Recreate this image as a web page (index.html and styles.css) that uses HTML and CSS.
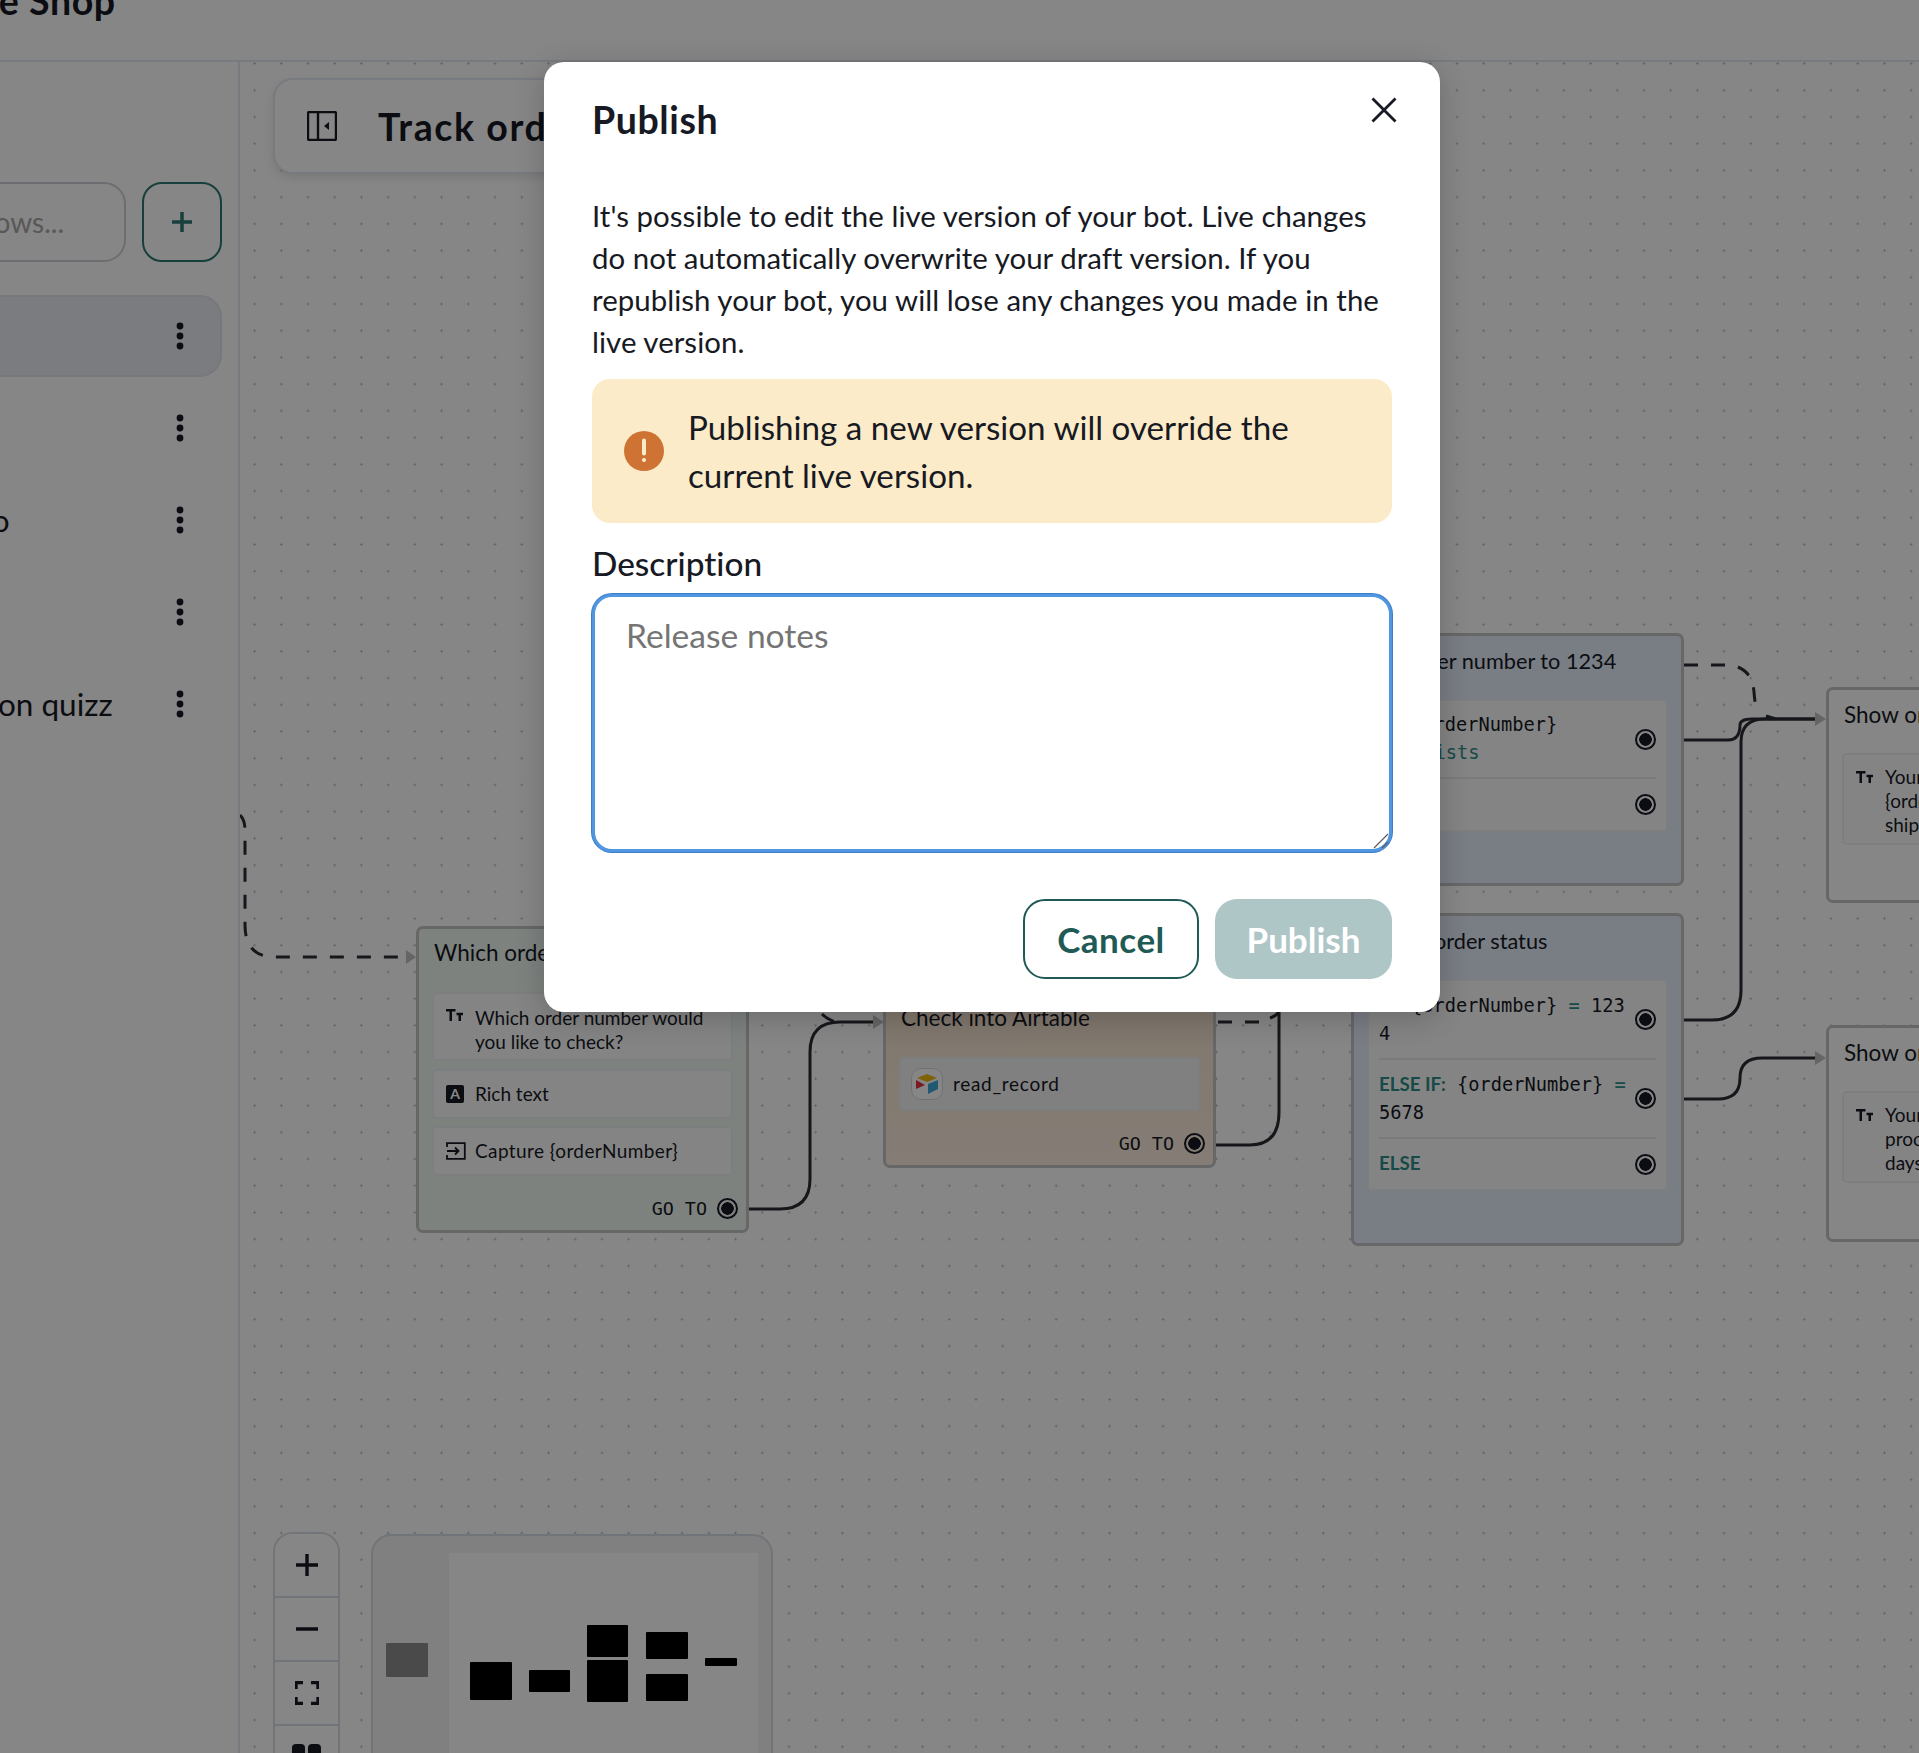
FILE: index.html
```html
<!DOCTYPE html>
<html lang="en">
<head>
<meta charset="utf-8">
<title>Publish</title>
<link rel="stylesheet" href="styles.css">
</head>
<body>
<div class="app">
  <header class="topbar"><h1 class="shop">The Shoe Shop</h1></header>
  <div class="main">
    <aside class="sidebar">
      <div class="search-row">
        <div class="search">Search flows...</div>
        <button class="add" type="button"><svg width="24" height="24" viewBox="0 0 24 24"><path d="M12 2v20M2 12h20"/></svg></button>
      </div>
      <ul class="flows">
        <li class="flow selected"><span class="flow-name">Track order</span><svg class="kebab" width="8" height="28" viewBox="0 0 8 28"><circle cx="4" cy="4" r="3.4"/><circle cx="4" cy="14" r="3.4"/><circle cx="4" cy="24" r="3.4"/></svg></li>
        <li class="flow"><span class="flow-name">Welcome</span><svg class="kebab" width="8" height="28" viewBox="0 0 8 28"><circle cx="4" cy="4" r="3.4"/><circle cx="4" cy="14" r="3.4"/><circle cx="4" cy="24" r="3.4"/></svg></li>
        <li class="flow"><span class="flow-name">Customer video</span><svg class="kebab" width="8" height="28" viewBox="0 0 8 28"><circle cx="4" cy="4" r="3.4"/><circle cx="4" cy="14" r="3.4"/><circle cx="4" cy="24" r="3.4"/></svg></li>
        <li class="flow"><span class="flow-name">FAQ</span><svg class="kebab" width="8" height="28" viewBox="0 0 8 28"><circle cx="4" cy="4" r="3.4"/><circle cx="4" cy="14" r="3.4"/><circle cx="4" cy="24" r="3.4"/></svg></li>
        <li class="flow"><span class="flow-name">Recommendation quizz</span><svg class="kebab" width="8" height="28" viewBox="0 0 8 28"><circle cx="4" cy="4" r="3.4"/><circle cx="4" cy="14" r="3.4"/><circle cx="4" cy="24" r="3.4"/></svg></li>
      </ul>
    </aside>

    <section class="canvas">
      <svg class="edges" width="1679" height="1691" viewBox="240 62 1679 1691">
        <g class="dashed">
          <path d="M240 815 Q245 820 245 830 V925 Q245 957 275 957 H406"/>
          <path d="M822 1014 Q828 1020 836 1022"/>
          <path d="M1218 1022 H1262 M1270 1018 Q1276 1016 1279 1012"/>
          <path d="M1684 665 H1730 Q1752 668 1754 692 Q1755 705 1757 710 M1766 716 L1776 719"/>
        </g>
        <g class="solid">
          <path d="M748 1209 H780 Q810 1209 810 1179 V1052 Q810 1022 840 1022 H876"/>
          <path d="M1216 1145 H1250 Q1279 1145 1279 1112 V1012"/>
          <path d="M1684 740 H1728 Q1740 740 1740 725 Q1740 719 1752 719 H1816"/>
          <path d="M1684 1020 H1712 Q1741 1020 1741 990 V742 Q1741 719 1765 719 H1816"/>
          <path d="M1684 1099 H1718 Q1740 1099 1740 1078 Q1740 1058 1762 1058 H1816"/>
        </g>
        <g class="heads">
          <path d="M406 950 L416 957 L406 964Z"/>
          <path d="M873 1015 L884 1022 L873 1029Z"/>
          <path d="M1815 712 L1826 719 L1815 726Z"/>
          <path d="M1815 1051 L1826 1058 L1815 1065Z"/>
        </g>
      </svg>

      <div class="track-panel">
        <svg class="panel-icon" width="30" height="30" viewBox="0 0 30 30"><rect x="1" y="1" width="28" height="28" rx="1.5"/><path d="M11 1v28"/><path class="fill" d="M22 11v8l-5-4z"/></svg>
        <h2 class="track-title">Track order</h2>
      </div>

      <article class="node node-ask">
        <h3 class="node-title">Which order number?</h3>
        <div class="card card-tall">
          <svg class="tt" width="17" height="12" viewBox="0 0 17 12"><path d="M0 1.2h9.5M4.75 1.2V12M10.5 5h6.5M13.75 5v7"/></svg>
          <span class="card-text">Which order number would you like to check?</span>
        </div>
        <div class="card card-row">
          <span class="rich-icon">A</span>
          <span class="card-text">Rich text</span>
        </div>
        <div class="card card-row">
          <svg class="capture" width="20" height="18" viewBox="0 0 20 18"><path d="M1 5V1.2h17.8v15.6H1V13M1 9h11M9 5.5L12.5 9 9 12.5"/></svg>
          <span class="card-text capture-text">Capture {orderNumber}</span>
        </div>
        <div class="goto"><span>GO TO</span><i class="radio"></i></div>
      </article>

      <article class="node node-air">
        <h3 class="node-title">Check into Airtable</h3>
        <div class="card card-air">
          <span class="air-icon"><svg width="22" height="20" viewBox="0 0 22 20"><path fill="#f2b90f" d="M11 0 L21 4 L11 8 L1 4Z"/><path fill="#e8303f" d="M0 6 L9 11 L0 15Z"/><path fill="#3fa9d8" d="M12 10 L22 6 V15 L12 20Z"/></svg></span>
          <span class="card-text">read_record</span>
        </div>
        <div class="goto"><span>GO TO</span><i class="radio"></i></div>
      </article>

      <article class="node node-cond node-set">
        <h3 class="node-title">Set order number to 1234</h3>
        <div class="card card-cond">
          <div class="cond cond-a">
            <div class="cond-text"><b class="kw">IF:</b> {orderNumber}<br><span class="op indent">exists</span></div>
            <i class="radio"></i>
          </div>
          <div class="cond cond-b">
            <div class="cond-text"><b class="kw">ELSE</b></div>
            <i class="radio"></i>
          </div>
        </div>
      </article>

      <article class="node node-cond node-status">
        <h3 class="node-title">Check order status</h3>
        <div class="card card-cond">
          <div class="cond cond-c">
            <div class="cond-text"><b class="kw">IF:</b> {orderNumber} <span class="op">=</span> 1234</div>
            <i class="radio"></i>
          </div>
          <div class="cond cond-c">
            <div class="cond-text"><b class="kw">ELSE IF:</b> {orderNumber} <span class="op">=</span> 5678</div>
            <i class="radio"></i>
          </div>
          <div class="cond cond-d">
            <div class="cond-text"><b class="kw">ELSE</b></div>
            <i class="radio"></i>
          </div>
        </div>
      </article>

      <article class="node node-show node-ship">
        <h3 class="node-title">Show order shipped</h3>
        <div class="card card-show">
          <svg class="tt" width="17" height="12" viewBox="0 0 17 12"><path d="M0 1.2h9.5M4.75 1.2V12M10.5 5h6.5M13.75 5v7"/></svg>
          <span class="card-text">Your order number<br>{orderNumber} is<br>shipped</span>
        </div>
      </article>

      <article class="node node-show node-proc">
        <h3 class="node-title">Show order processing</h3>
        <div class="card card-show">
          <svg class="tt" width="17" height="12" viewBox="0 0 17 12"><path d="M0 1.2h9.5M4.75 1.2V12M10.5 5h6.5M13.75 5v7"/></svg>
          <span class="card-text">Your order is still<br>processing, give it a few<br>days</span>
        </div>
      </article>

      <div class="zoom-controls">
        <button type="button"><svg width="24" height="24" viewBox="0 0 24 24"><path d="M12 1v22M1 12h22"/></svg></button>
        <button type="button"><svg width="24" height="24" viewBox="0 0 24 24"><path d="M1 12h22"/></svg></button>
        <button type="button"><svg width="24" height="24" viewBox="0 0 24 24"><path d="M1 8V1.5h7M16 1.5h7V8M23 16v6.5h-7M8 22.5H1V16"/></svg></button>
        <button type="button"><svg class="layout-icon" width="30" height="30" viewBox="0 0 30 30"><rect x="0" y="0" width="13" height="30" rx="4"/><rect x="16" y="0" width="13" height="30" rx="4"/></svg></button>
      </div>

      <div class="minimap">
        <svg width="398" height="220" viewBox="373 1536 398 220">
          <rect class="mm-view" x="449" y="1553" width="309" height="210"/>
          <rect class="mm-grey" x="386" y="1643" width="42" height="34" rx="1"/>
          <g class="mm-nodes">
            <rect x="470" y="1662" width="42" height="38" rx="1"/>
            <rect x="529" y="1670" width="41" height="22" rx="1"/>
            <rect x="587" y="1625" width="41" height="32" rx="1"/>
            <rect x="587" y="1660" width="41" height="42" rx="1"/>
            <rect x="646" y="1632" width="42" height="27" rx="1"/>
            <rect x="646" y="1674" width="42" height="27" rx="1"/>
            <rect x="705" y="1658" width="32" height="8" rx="1"/>
          </g>
        </svg>
      </div>
    </section>
  </div>
</div>

<div class="overlay">
  <div class="modal" role="dialog" aria-modal="true">
    <div class="modal-head">
      <h2 class="modal-title">Publish</h2>
      <button class="close" type="button" aria-label="Close"><svg width="26" height="26" viewBox="0 0 26 26"><path d="M1.5 1.5l23 23M24.5 1.5l-23 23"/></svg></button>
    </div>
    <p class="modal-body">It's possible to edit the live version of your bot. Live changes do not automatically overwrite your draft version. If you republish your bot, you will lose any changes you made in the live version.</p>
    <div class="alert">
      <svg class="alert-icon" width="40" height="40" viewBox="0 0 40 40"><circle cx="20" cy="20" r="20"/><path d="M20 9.5v13"/><circle class="dot" cx="20" cy="29" r="2"/></svg>
      <span class="alert-text">Publishing a new version will override the current live version.</span>
    </div>
    <label class="field-label" for="notes">Description</label>
    <div class="notes-wrap">
      <textarea class="notes" id="notes" placeholder="Release notes"></textarea>
      <svg class="grip" width="16" height="16" viewBox="0 0 16 16"><path d="M1 15L15 1M9 15l6-6"/></svg>
    </div>
    <div class="actions">
      <button class="btn btn-cancel" type="button">Cancel</button>
      <button class="btn btn-publish" type="button">Publish</button>
    </div>
  </div>
</div>
</body>
</html>
```
FILE: styles.css
```css
* { box-sizing: border-box; }
html, body { margin: 0; padding: 0; height: 1753px; overflow: hidden; background: #fff; }
body { font-family: "Lato", "Liberation Sans", sans-serif; color: #171923; position: relative; font-variant-ligatures: none; }
h1, h2, h3, p, ul { margin: 0; padding: 0; }
button { font-family: inherit; cursor: pointer; }

.app { width: 2139px; margin: -39px 0 0 -220px; }

.topbar { height: 101px; border-bottom: 2px solid #e2e8f0; padding-left: 79px; }
.shop { font-size: 37.5px; letter-spacing: .6px; line-height: 80px; font-weight: 700; }

.main { display: flex; height: 1691px; }

.sidebar { width: 460px; flex: none; border-right: 2px solid #e2e8f0; padding: 120px 16px 0 0; }
.search-row { display: flex; gap: 16px; }
.search { flex: 1; height: 80px; border: 2px solid #cbd0d6; border-radius: 22px; font-size: 28px; line-height: 76px; color: #a8a8a8; text-align: right; padding-right: 60px; }
.add { width: 80px; height: 80px; flex: none; background: #fff; border: 2px solid #2c7a72; border-radius: 20px; display: flex; align-items: center; justify-content: center; padding: 0; }
.add path { stroke: #2c7a72; stroke-width: 3.5; fill: none; }

.flows { list-style: none; margin-top: 33px; display: flex; flex-direction: column; gap: 10px; padding-left: 10px; }
.flow { height: 82px; display: flex; align-items: center; justify-content: space-between; padding-right: 36px; font-size: 31.5px; border: 2px solid transparent; border-radius: 22px; }
.flow-name { white-space: nowrap; }
.flow.selected { background: #e9ecf2; border-color: #e0e4ea; }
.kebab { fill: #171923; }

.canvas { position: relative; flex: 1; overflow: hidden; background-color: #fff;
  background-image: radial-gradient(circle, #b4b8be .9px, transparent 1.2px);
  background-size: 26.72px 26.72px; background-position: 1.24px 14.9px; }
.edges { position: absolute; left: 0; top: 0; }
.edges path { fill: none; stroke-width: 3; }
.solid path { stroke: #2a2d33; }
.dashed path { stroke: #2a2d33; stroke-dasharray: 14 13; }
.edges .heads path { fill: #c0c0c0; stroke: none; }

.track-panel { position: absolute; left: 33px; top: 16px; width: 640px; height: 96px; background: #fff; border: 2px solid #e2e8f0; border-radius: 20px; box-shadow: 0 4px 10px rgba(0,0,0,.1); display: flex; align-items: center; padding-left: 32px; gap: 41px; }
.panel-icon rect, .panel-icon path { fill: none; stroke: #171923; stroke-width: 2.4; }
.panel-icon .fill { fill: #171923; stroke: none; }
.track-title { font-size: 37.5px; letter-spacing: 1.6px; font-weight: 700; white-space: nowrap; }

.node { position: absolute; width: 333px; border: 3px solid #c4c4c4; border-radius: 7px; padding: 0 13px 10px; display: flex; flex-direction: column; gap: 7px; }
.node-title { font-size: 22.5px; font-weight: 400; line-height: 30px; padding: 9px 0 24px 2px; margin-bottom: -7px; white-space: nowrap; }
.node-ask { left: 176px; top: 864px; background: #eef7f2; }
.node-air { left: 643px; top: 929px; background: linear-gradient(#f4e2cf, #fdeedf); }
.node-set { left: 1111px; top: 571px; height: 253px; }
.node-status { left: 1111px; top: 851px; height: 333px; }
.node-ship { left: 1586px; top: 625px; height: 216px; }
.node-proc { left: 1586px; top: 963px; height: 217px; }
.node-cond { background: #e6eefc; }
.node-cond .node-title { font-size: 21.7px; padding: 10px 0 23px 2px; }
.node-show { background: #fff; }
.node-show .node-title { padding: 10px 0 23px 2px; }

.card { background: #fbfcfd; border: 2px solid #eef0f3; border-radius: 5px; font-size: 19px; line-height: 24px; display: flex; }
.card-tall { height: 69px; padding: 12px 10px 0 12px; gap: 12px; margin-bottom: 1px; }
.card-tall .tt { margin-top: 3px; flex: none; }
.card-row { height: 50px; align-items: center; padding: 0 10px 0 12px; gap: 11px; }
.card-air { height: 54px; align-items: center; padding: 0 10px; gap: 10px; background: #f3f4f6; }
.card-air .card-text { letter-spacing: .7px; }
.card-show { height: 92px; padding: 10px 0 0 12px; gap: 12px; width: 305px; }
.card-show .tt { flex: none; margin-top: 6px; }
.card-text { white-space: normal; }
.capture-text { letter-spacing: .4px; }
.tt path { fill: none; stroke: #171923; stroke-width: 2.5; }
.rich-icon { width: 18px; height: 18px; flex: none; background: #171923; color: #fff; border-radius: 2px; font-size: 14px; line-height: 18px; text-align: center; font-weight: 700; }
.capture { flex: none; margin-right: -2px; }
.capture path { fill: none; stroke: #171923; stroke-width: 1.8; }
.air-icon { width: 32px; height: 32px; flex: none; background: #fff; border: 1px solid #d6d8dc; border-radius: 10px; display: flex; align-items: center; justify-content: center; }

.goto { display: flex; justify-content: flex-end; align-items: center; gap: 10px; height: 24px; margin: 13px -5px 0 0; font-family: "DejaVu Sans Mono", monospace; font-size: 18.4px; }
.radio { display: block; width: 21px; height: 21px; border-radius: 50%; border: 2px solid #171923; background: radial-gradient(circle, #171923 0, #171923 6px, transparent 6.5px); flex: none; }

.card-cond { flex-direction: column; padding: 0 10px 0 10px; }
.cond { display: flex; justify-content: space-between; align-items: center; border-bottom: 2px solid #e6e8ec; }
.cond:last-child { border-bottom: 0; }
.cond-a { height: 78px; }
.cond-b { height: 51px; }
.cond-c { height: 79px; }
.cond-d { height: 50px; }
.cond-text { width: 250px; font-family: "DejaVu Sans Mono", monospace; font-size: 18.7px; line-height: 28px; word-break: break-all; color: #171923; margin-top: -1px; }
.kw { font-family: "Lato", sans-serif; font-weight: 700; color: #2f8f87; }
.op { color: #2f8f87; }
.indent { margin-left: 33px; }

.zoom-controls { position: absolute; left: 33px; top: 1470px; width: 67px; background: #fff; border: 2px solid #d8dde4; border-radius: 20px; overflow: hidden; display: flex; flex-direction: column; }
.zoom-controls button { height: 64px; border: 0; border-bottom: 2px solid #d8dde4; background: #fff; padding: 0; display: flex; align-items: center; justify-content: center; flex: none; }
.zoom-controls svg path { fill: none; stroke: #171923; stroke-width: 3.4; }
.layout-icon { margin-top: 3px; }
.layout-icon rect { fill: #171923; }

.minimap { position: absolute; left: 131px; top: 1472px; width: 402px; height: 300px; background: #f4f4f4; border: 2px solid #d8dde4; border-radius: 20px; overflow: hidden; }
.minimap svg { display: block; }
.mm-view { fill: #fff; }
.mm-grey { fill: #8e8e8e; }
.mm-nodes rect { fill: #000; }

.overlay { position: absolute; left: 0; top: 0; width: 1919px; height: 1753px; background: rgba(0,0,0,.475); padding: 62px 0 0 544px; }
.modal { width: 896px; height: 950px; background: #fff; border-radius: 20px; padding: 0 48px; box-shadow: 0 6px 30px rgba(0,0,0,.2); }
.modal-head { display: flex; justify-content: space-between; align-items: flex-start; height: 133px; padding-top: 37px; }
.modal-title { font-size: 37.5px; letter-spacing: .6px; line-height: 42px; font-weight: 700; }
.close { border: 0; background: none; padding: 0; margin: -2px -5px 0 0; width: 26px; height: 26px; }
.close path { fill: none; stroke: #171923; stroke-width: 2.8; }
.modal-body { font-size: 29.4px; line-height: 42px; letter-spacing: .05px; }
.alert { margin-top: 16px; height: 144px; background: #fbebc8; border-radius: 18px; display: flex; align-items: center; gap: 24px; padding: 0 32px; }
.alert-icon { flex: none; }
.alert-icon circle { fill: #cf7335; }
.alert-icon path { stroke: #fbebc8; stroke-width: 4; stroke-linecap: round; fill: none; }
.alert-icon .dot { fill: #fbebc8; }
.alert-text { font-size: 33.2px; line-height: 48px; }
.field-label { display: block; margin-top: 19px; font-size: 33.4px; line-height: 42px; font-weight: 500; }
.notes-wrap { position: relative; width: 800px; margin-top: 10px; }
.notes { display: block; width: 800px; height: 258px; padding: 14px 31px; border: 3px solid #4f97e0; box-shadow: 0 0 0 1px #3f7cc8; outline: none; border-radius: 20px; font-family: inherit; font-size: 33.6px; line-height: 48px; background: #fff; color: #171923; resize: none; }
.notes::placeholder { color: #757575; opacity: 1; }
.grip { position: absolute; right: 3px; bottom: 3px; }
.grip path { fill: none; stroke: #5c5c5c; stroke-width: 1.2; }
.actions { display: flex; justify-content: flex-end; gap: 16px; margin-top: 47px; }
.btn { height: 80px; border-radius: 22px; font-size: 35px; letter-spacing: .5px; font-weight: 700; padding: 0; }
.btn-cancel { width: 176px; background: #fff; border: 2px solid #1f5a56; color: #1f5a56; }
.btn-publish { width: 177px; background: #aec6c6; border: 0; color: #fff; letter-spacing: 0; }
```
